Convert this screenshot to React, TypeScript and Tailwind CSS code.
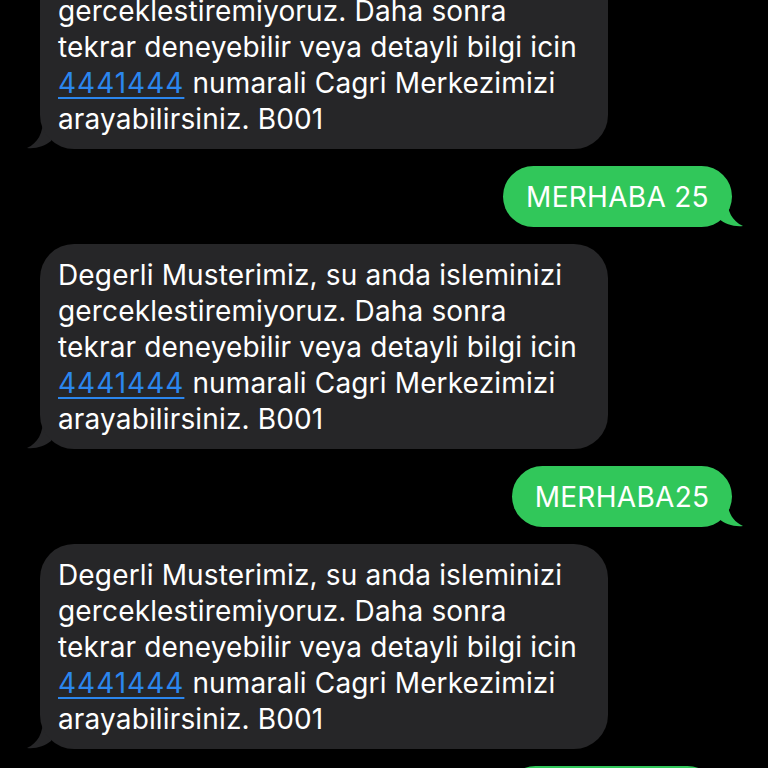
import React from "react";

const lines = [
  "Degerli Musterimiz, su anda isleminizi",
  "gerceklestiremiyoruz. Daha sonra",
  "tekrar deneyebilir veya detayli bilgi icin",
];

function GrayBubble({ className = "" }: { className?: string }) {
  return (
    <div className={`relative self-start ml-[40px] ${className}`}>
      <svg
        className="absolute left-[-13px] bottom-0"
        width="30"
        height="30"
        viewBox="0 0 30 30"
      >
        <path d="M16 0 C16 14 11 24 0 29 C9 30 18 27 24 22 L30 0 Z" fill="#262628" />
      </svg>
      <div className="relative w-[568px] rounded-[34px] bg-[#262628] pl-[18px] pr-3 pt-[13px] pb-[12px] text-[28px] leading-[36px] text-white tracking-[0.15px]">
        {lines.map((l) => (
          <div key={l} className="whitespace-nowrap">{l}</div>
        ))}
        <div className="whitespace-nowrap">
          <span className="text-[#2b86ee] underline decoration-[2px] underline-offset-[4px] tracking-[1px]">4441444</span>{" "}
          numarali Cagri Merkezimizi
        </div>
        <div className="whitespace-nowrap">arayabilirsiniz. B001</div>
      </div>
    </div>
  );
}

function GreenBubble({ text, w, className = "" }: { text: string; w: string; className?: string }) {
  return (
    <div className={`relative self-end mr-[36px] ${className}`}>
      <svg
        className="absolute right-[-11px] bottom-0"
        width="30"
        height="30"
        viewBox="0 0 30 30"
      >
        <path d="M14 0 C14 14 19 24 30 29 C21 30 12 27 6 22 L0 0 Z" fill="#31c75a" />
      </svg>
      <div className={`relative ${w} h-[61px] rounded-[31px] bg-[#31c75a] flex items-center justify-center text-[28px] leading-[36px] text-white whitespace-nowrap tracking-[0.3px]`}>
        {text}
      </div>
    </div>
  );
}

export default function App() {
  return (
    <div
      className="w-[768px] h-[768px] overflow-hidden bg-black"
      style={{ fontFamily: "Inter, 'Noto Sans', sans-serif" }}
    >
      <div className="flex flex-col gap-[17px] mt-[-56px]">
        <GrayBubble />
        <GreenBubble text="MERHABA 25" w="w-[229px]" />
        <GrayBubble />
        <GreenBubble text="MERHABA25" w="w-[220px]" />
        <GrayBubble />
        <GreenBubble text="MERHABA" w="w-[213px]" className="mr-[50px]" />
      </div>
    </div>
  );
}
